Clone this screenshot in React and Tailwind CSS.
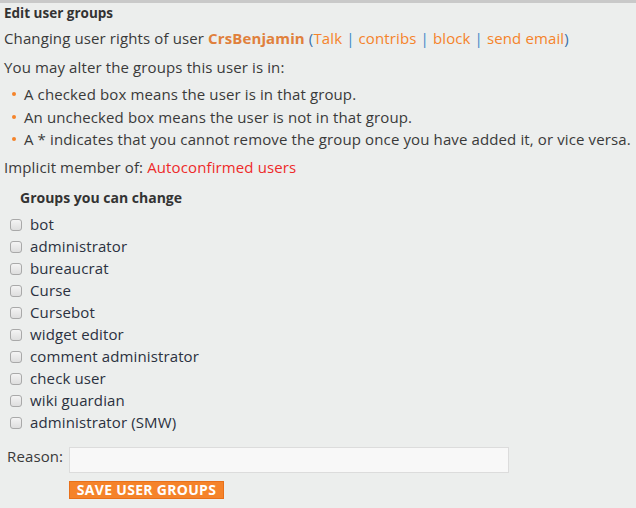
import React from "react";

const groups = [
  "bot",
  "administrator",
  "bureaucrat",
  "Curse",
  "Cursebot",
  "widget editor",
  "comment administrator",
  "check user",
  "wiki guardian",
  "administrator (SMW)",
];

export default function App() {
  return (
    <div
      className="w-[636px] h-[508px] overflow-hidden bg-[#eceeed] border-t-[3px] border-[#c9c9c9] text-[15px] tracking-[0.12px] text-[#3a3a3a]"
      style={{ fontFamily: '"Open Sans", sans-serif' }}
    >
      <div className="px-1 pt-[1px] h-[19px] leading-[18px] text-[13.5px] tracking-normal font-bold text-[#333]">Edit user groups</div>
      <div className="px-1 mt-[5px] leading-[22px]">
        Changing user rights of user{" "}
        <span className="font-bold text-[#e0803c]">CrsBenjamin</span>{" "}
        <span className="text-[#3a6ea8]">(</span>
        <span className="text-[#f5832a]">Talk</span>
        <span className="text-[#3a88c8]"> | </span>
        <span className="text-[#f5832a]">contribs</span>
        <span className="text-[#3a88c8]"> | </span>
        <span className="text-[#f5832a]">block</span>
        <span className="text-[#3a88c8]"> | </span>
        <span className="text-[#f5832a]">send email</span>
        <span className="text-[#3a6ea8]">)</span>
      </div>
      <div className="px-1 mt-[7px] leading-[22px]">You may alter the groups this user is in:</div>
      <ul className="mt-[5px] pl-[12px]">
        {[
          "A checked box means the user is in that group.",
          "An unchecked box means the user is not in that group.",
          "A * indicates that you cannot remove the group once you have added it, or vice versa.",
        ].map((t) => (
          <li key={t} className="flex items-center leading-[22.5px] whitespace-nowrap">
            <span className="w-[4px] h-[4px] rounded-full bg-[#f5832a] mr-[8px] shrink-0" />
            {t}
          </li>
        ))}
      </ul>
      <div className="px-1 mt-[5px] leading-[22px]">
        Implicit member of: <span className="text-[#ee2a2a]">Autoconfirmed users</span>
      </div>
      <div className="pl-[20px] mt-[9px] leading-[22px] text-[14px] tracking-normal font-bold text-[#333]">Groups you can change</div>
      <div className="mt-[5px] pl-[10px]">
        {groups.map((g) => (
          <label key={g} className="flex items-center h-[22px] text-[#2b3140]">
            <span className="w-[12px] h-[12px] rounded-[3px] border border-[#a9a9a9] bg-gradient-to-b from-[#f4f4f4] to-[#dedede] mr-[8px] shrink-0" />
            {g}
          </label>
        ))}
      </div>
      <div className="flex items-start mt-[13px] pl-[7px]">
        <span className="w-[62px] leading-[18px]">Reason:</span>
        <div className="w-[440px] h-[26px] bg-[#f8f8f8] border border-[#dcdcdc]" />
      </div>
      <div className="flex pl-[69px] mt-[8px]">
        <button className="block h-[18px] w-[155px] bg-[#f5832a] border border-[#e8701a] text-white text-[14px] tracking-[0.3px] font-bold uppercase leading-[16px]">
          Save user groups
        </button>
      </div>
    </div>
  );
}
